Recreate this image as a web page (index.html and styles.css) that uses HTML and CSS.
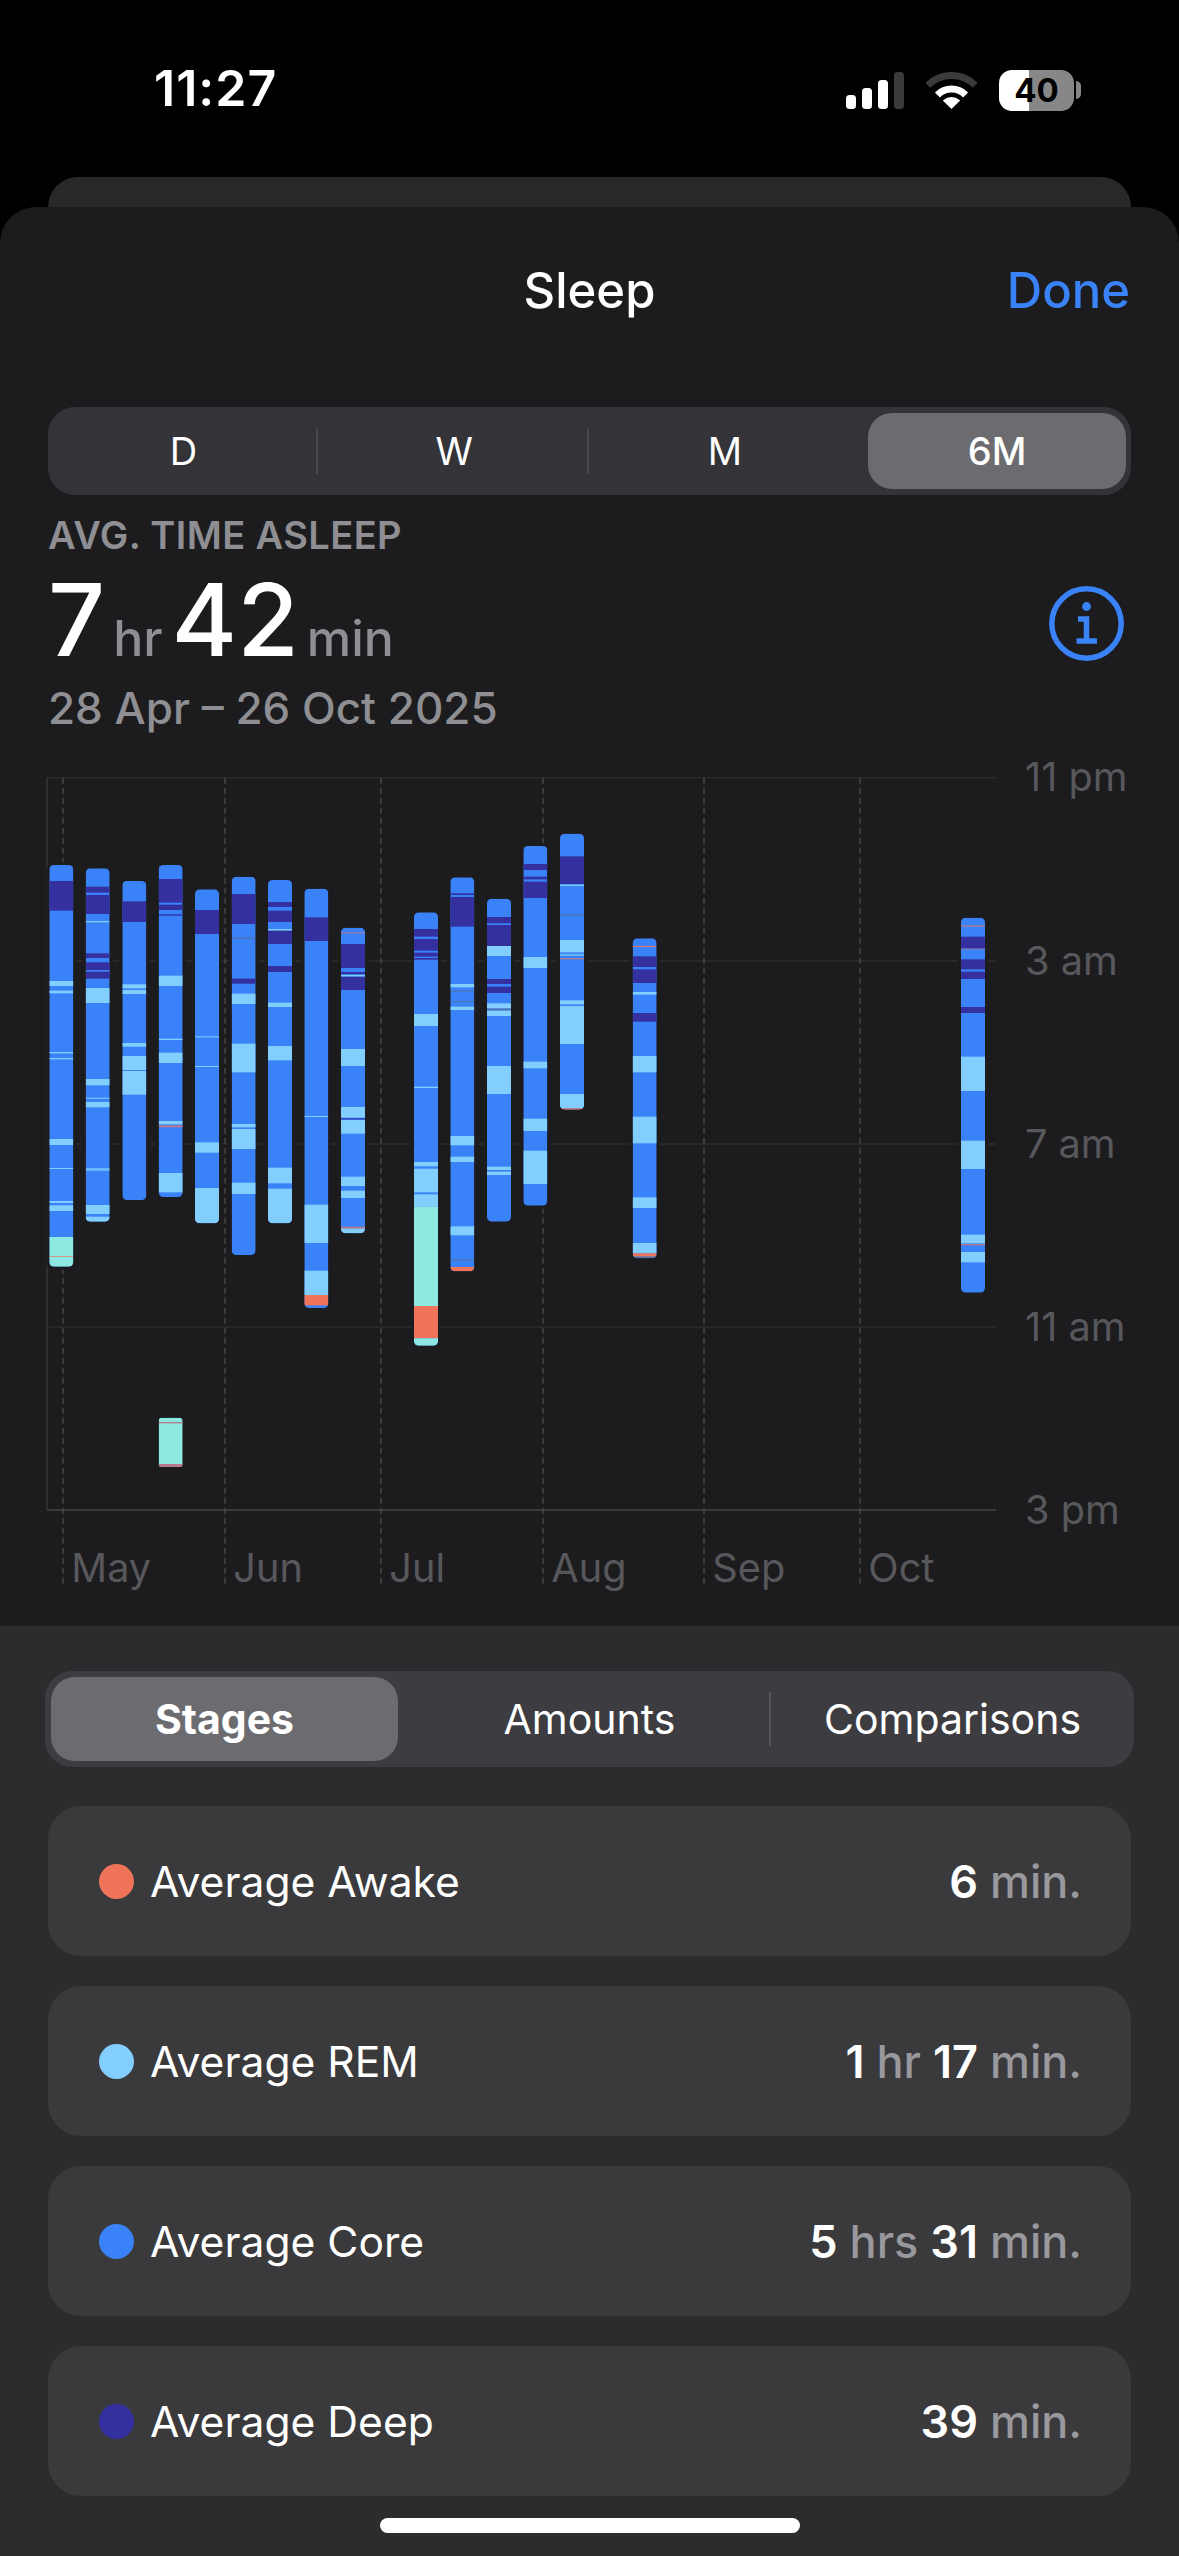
FILE: index.html
```html
<!DOCTYPE html>
<html lang="en">
<head>
<meta charset="utf-8">
<title>Sleep</title>
<link rel="stylesheet" href="styles.css">
</head>
<body>
<div class="phone">
  <header class="status">
    <span class="time">11:27</span>
    <div class="status-icons">
      <div class="signal"><i class="b1"></i><i class="b2"></i><i class="b3"></i><i class="b4"></i></div>
      <svg class="wifi" width="51" height="37" viewBox="0 0 51 37">
        <path class="wifi-dim" d="M1.8 13.3A33.5 33.5 0 0 1 49.2 13.3"/>
        <path class="wifi-on" d="M11.4 22.9A20 20 0 0 1 39.6 22.9"/>
        <path class="wifi-tip" d="M25.5 37L16.8 28.4Q25.5 21.8 34.2 28.4Z"/>
      </svg>
      <div class="battery"><span class="battery-level">40</span><i class="battery-nub"></i></div>
    </div>
  </header>
  <div class="peek"></div>
  <main class="sheet">
    <nav class="nav">
      <span></span>
      <span class="nav-title">Sleep</span>
      <span class="nav-done">Done</span>
    </nav>
    <div class="range">
      <span class="range-item rule-r">D</span>
      <span class="range-item rule-r">W</span>
      <span class="range-item">M</span>
      <span class="range-item on">6M</span>
    </div>
    <section class="summary">
      <div>
        <div class="summary-label">AVG. TIME ASLEEP</div>
        <div class="summary-value"><b>7</b><small>hr</small><b>42</b><small>min</small></div>
        <div class="summary-date">28 Apr – 26 Oct 2025</div>
      </div>
      <svg class="info" width="75" height="75" viewBox="0 0 75 75">
        <circle cx="37.5" cy="37.5" r="34.7"/>
        <circle class="info-dot" cx="37.5" cy="20.5" r="4.4"/>
        <path d="M29 33H37.5V55M27.5 55H48"/>
      </svg>
    </section>
    <svg class="chart" viewBox="0 -30 3447 2568">
      <g class="grid">
        <path class="grid-edge" d="M51 -7V2190"/>
        <path d="M51 -7H2898M51 543H2898M51 1092H2898M51 1641H2898"/>
        <path class="grid-base" d="M51 2190H2898"/>
      </g>
      <path class="dash" d="M99 -7V2424M585 -7V2424M1053 -7V2424M1539 -7V2424M2022 -7V2424M2490 -7V2424"/>

      <g transform="translate(58 0)"><clipPath id="b0"><rect width="72" y="255" height="1205" rx="14"/></clipPath><rect class="halo" width="72" y="255" height="1205" rx="14"/><g clip-path="url(#b0)">
        <rect class="s c" y="255" height="1205"/><rect class="s d" y="303" height="89"/><rect class="s r" y="603" height="15"/><rect class="s r" y="632" height="8"/><rect class="s r" y="816" height="4"/><rect class="s r" y="834" height="4"/><rect class="s r" y="1077" height="18"/><rect class="s r" y="1164" height="3"/><rect class="s r" y="1263" height="6"/><rect class="s r" y="1276" height="17"/><rect class="s t" y="1371" height="89"/><rect class="s a" y="1429" height="2"/>
      </g></g>
      <g transform="translate(167 0)"><clipPath id="b1"><rect width="72" y="265" height="1060" rx="14"/></clipPath><rect class="halo" width="72" y="265" height="1060" rx="14"/><g clip-path="url(#b1)">
        <rect class="s c" y="265" height="1060"/><rect class="s d" y="320" height="18"/><rect class="s d" y="345" height="57"/><rect class="s r" y="423" height="4"/><rect class="s d" y="520" height="14"/><rect class="s d" y="547" height="23"/><rect class="s d" y="575" height="21"/><rect class="s r" y="624" height="45"/><rect class="s r" y="897" height="19"/><rect class="s r" y="953" height="3"/><rect class="s r" y="966" height="16"/><rect class="s r" y="1165" height="4"/><rect class="s r" y="1171" height="2"/><rect class="s r" y="1275" height="27"/><rect class="s r" y="1310" height="15"/>
      </g></g>
      <g transform="translate(277 0)"><clipPath id="b2"><rect width="72" y="303" height="957" rx="14"/></clipPath><rect class="halo" width="72" y="303" height="957" rx="14"/><g clip-path="url(#b2)">
        <rect class="s c" y="303" height="957"/><rect class="s d" y="364" height="62"/><rect class="s r" y="613" height="12"/><rect class="s r" y="630" height="12"/><rect class="s r" y="789" height="11"/><rect class="s r" y="828" height="42"/><rect class="s r" y="873" height="71"/>
      </g></g>
      <g transform="translate(386 0)"><clipPath id="b3"><rect width="72" y="255" height="996" rx="14"/></clipPath><rect class="halo" width="72" y="255" height="996" rx="14"/><g clip-path="url(#b3)">
        <rect class="s c" y="255" height="996"/><rect class="s d" y="297" height="71"/><rect class="s d" y="374" height="16"/><rect class="s d" y="403" height="4"/><rect class="s r" y="587" height="31"/><rect class="s r" y="776" height="4"/><rect class="s r" y="818" height="31"/><rect class="s r" y="1023" height="10"/><rect class="s p" y="1036" height="6"/><rect class="s r" y="1179" height="58"/>
      </g></g>
      <g transform="translate(495 0)"><clipPath id="b4"><rect width="72" y="328" height="1002" rx="14"/></clipPath><rect class="halo" width="72" y="328" height="1002" rx="14"/><g clip-path="url(#b4)">
        <rect class="s c" y="328" height="1002"/><rect class="s d" y="390" height="72"/><rect class="s r" y="769" height="3"/><rect class="s r" y="858" height="3"/><rect class="s r" y="1087" height="31"/><rect class="s r" y="1224" height="106"/>
      </g></g>
      <g transform="translate(605 0)"><clipPath id="b5"><rect width="72" y="290" height="1135" rx="14"/></clipPath><rect class="halo" width="72" y="290" height="1135" rx="14"/><g clip-path="url(#b5)">
        <rect class="s c" y="290" height="1135"/><rect class="s d" y="342" height="90"/><rect class="s m" y="472" height="4"/><rect class="s d" y="596" height="15"/><rect class="s r" y="641" height="31"/><rect class="s r" y="791" height="86"/><rect class="s r" y="1032" height="10"/><rect class="s r" y="1047" height="60"/><rect class="s r" y="1208" height="34"/>
      </g></g>
      <g transform="translate(714 0)"><clipPath id="b6"><rect width="72" y="300" height="1030" rx="14"/></clipPath><rect class="halo" width="72" y="300" height="1030" rx="14"/><g clip-path="url(#b6)">
        <rect class="s c" y="300" height="1030"/><rect class="s d" y="366" height="15"/><rect class="s d" y="392" height="34"/><rect class="s r" y="447" height="5"/><rect class="s d" y="452" height="40"/><rect class="s d" y="558" height="18"/><rect class="s r" y="668" height="13"/><rect class="s r" y="798" height="43"/><rect class="s r" y="1163" height="47"/><rect class="s r" y="1226" height="104"/>
      </g></g>
      <g transform="translate(823 0)"><clipPath id="b7"><rect width="72" y="326" height="1258" rx="14"/></clipPath><rect class="halo" width="72" y="326" height="1258" rx="14"/><g clip-path="url(#b7)">
        <rect class="s c" y="326" height="1258"/><rect class="s d" y="412" height="71"/><rect class="s r" y="1008" height="3"/><rect class="s r" y="1274" height="115"/><rect class="s r" y="1472" height="73"/><rect class="s a" y="1545" height="31"/>
      </g></g>
      <g transform="translate(933 0)"><clipPath id="b8"><rect width="72" y="443" height="917" rx="14"/></clipPath><rect class="halo" width="72" y="443" height="917" rx="14"/><g clip-path="url(#b8)">
        <rect class="s c" y="443" height="917"/><rect class="s p" y="457" height="3"/><rect class="s d" y="492" height="72"/><rect class="s d" y="576" height="6"/><rect class="s r" y="585" height="5"/><rect class="s d" y="590" height="40"/><rect class="s r" y="807" height="51"/><rect class="s r" y="981" height="32"/><rect class="s d" y="1015" height="3"/><rect class="s r" y="1020" height="41"/><rect class="s r" y="1190" height="28"/><rect class="s r" y="1232" height="22"/><rect class="s p" y="1340" height="6"/><rect class="s r" y="1346" height="14"/>
      </g></g>
      <g transform="translate(1152 0)"><clipPath id="b10"><rect width="72" y="397" height="1300" rx="14"/></clipPath><rect class="halo" width="72" y="397" height="1300" rx="14"/><g clip-path="url(#b10)">
        <rect class="s c" y="397" height="1300"/><rect class="s d" y="447" height="23"/><rect class="s d" y="477" height="35"/><rect class="s d" y="518" height="12"/><rect class="s d" y="534" height="5"/><rect class="s r" y="702" height="36"/><rect class="s r" y="920" height="4"/><rect class="s r" y="1146" height="13"/><rect class="s r" y="1166" height="71"/><rect class="s r" y="1243" height="37"/><rect class="s t" y="1280" height="298"/><rect class="s a" y="1578" height="97"/><rect class="s t" y="1675" height="22"/>
      </g></g>
      <g transform="translate(1261 0)"><clipPath id="b11"><rect width="72" y="292" height="1182" rx="14"/></clipPath><rect class="halo" width="72" y="292" height="1182" rx="14"/><g clip-path="url(#b11)">
        <rect class="s c" y="292" height="1182"/><rect class="s d" y="340" height="5"/><rect class="s d" y="351" height="89"/><rect class="s r" y="612" height="10"/><rect class="s m" y="632" height="3"/><rect class="s m" y="663" height="3"/><rect class="s r" y="680" height="10"/><rect class="s r" y="1068" height="28"/><rect class="s r" y="1130" height="16"/><rect class="s r" y="1339" height="27"/><rect class="s m" y="1438" height="4"/><rect class="s a" y="1461" height="13"/>
      </g></g>
      <g transform="translate(1371 0)"><clipPath id="b12"><rect width="72" y="356" height="969" rx="14"/></clipPath><rect class="halo" width="72" y="356" height="969" rx="14"/><g clip-path="url(#b12)">
        <rect class="s c" y="356" height="969"/><rect class="s d" y="411" height="19"/><rect class="s d" y="435" height="63"/><rect class="s r" y="498" height="30"/><rect class="s d" y="597" height="15"/><rect class="s d" y="620" height="19"/><rect class="s r" y="670" height="15"/><rect class="s m" y="686" height="6"/><rect class="s r" y="692" height="16"/><rect class="s r" y="858" height="84"/><rect class="s r" y="1160" height="10"/><rect class="s r" y="1175" height="10"/>
      </g></g>
      <g transform="translate(1480 0)"><clipPath id="b13"><rect width="72" y="198" height="1079" rx="14"/></clipPath><rect class="halo" width="72" y="198" height="1079" rx="14"/><g clip-path="url(#b13)">
        <rect class="s c" y="198" height="1079"/><rect class="s d" y="252" height="18"/><rect class="s d" y="290" height="8"/><rect class="s d" y="305" height="49"/><rect class="s r" y="531" height="33"/><rect class="s r" y="845" height="20"/><rect class="s r" y="1016" height="37"/><rect class="s r" y="1112" height="100"/>
      </g></g>
      <g transform="translate(1590 0)"><clipPath id="b14"><rect width="72" y="161" height="828" rx="14"/></clipPath><rect class="halo" width="72" y="161" height="828" rx="14"/><g clip-path="url(#b14)">
        <rect class="s c" y="161" height="828"/><rect class="s d" y="229" height="83"/><rect class="s r" y="314" height="4"/><rect class="s m" y="403" height="4"/><rect class="s r" y="480" height="37"/><rect class="s r" y="523" height="4"/><rect class="s p" y="534" height="4"/><rect class="s r" y="661" height="12"/><rect class="s r" y="678" height="114"/><rect class="s r" y="942" height="43"/><rect class="s a" y="985" height="4"/>
      </g></g>
      <g transform="translate(1808 0)"><clipPath id="b16"><rect width="72" y="475" height="960" rx="14"/></clipPath><rect class="halo" width="72" y="475" height="960" rx="14"/><g clip-path="url(#b16)">
        <rect class="s c" y="475" height="960"/><rect class="s a" y="498" height="3"/><rect class="s d" y="529" height="32"/><rect class="s d" y="568" height="41"/><rect class="s r" y="636" height="8"/><rect class="s d" y="699" height="26"/><rect class="s r" y="828" height="49"/><rect class="s r" y="1010" height="80"/><rect class="s r" y="1252" height="32"/><rect class="s r" y="1389" height="31"/><rect class="s a" y="1420" height="10"/><rect class="s m" y="1430" height="5"/>
      </g></g>
      <g transform="translate(2793 0)"><clipPath id="b25"><rect width="72" y="413" height="1125" rx="14"/></clipPath><rect class="halo" width="72" y="413" height="1125" rx="14"/><g clip-path="url(#b25)">
        <rect class="s c" y="413" height="1125"/><rect class="s p" y="436" height="4"/><rect class="s d" y="470" height="36"/><rect class="s p" y="506" height="2"/><rect class="s d" y="538" height="30"/><rect class="s d" y="575" height="22"/><rect class="s d" y="681" height="18"/><rect class="s r" y="830" height="103"/><rect class="s r" y="1082" height="85"/><rect class="s r" y="1364" height="26"/><rect class="s p" y="1392" height="4"/><rect class="s r" y="1416" height="31"/>
      </g></g>
      <g transform="translate(386 0)"><clipPath id="b3b"><rect width="72" y="1913" height="148" rx="10"/></clipPath><rect class="halo" width="72" y="1913" height="148" rx="10"/><g clip-path="url(#b3b)">
        <rect class="s t" y="1913" height="148"/><rect class="s p" y="1926" height="4"/><rect class="s p" y="2052" height="9"/>
      </g></g>

      <g class="axis">
        <text x="2985" y="34">11 pm</text>
        <text x="2985" y="586">3 am</text>
        <text x="2985" y="1135">7 am</text>
        <text x="2985" y="1684">11 am</text>
        <text x="2985" y="2233">3 pm</text>
        <text x="124" y="2406">May</text>
        <text x="610" y="2406">Jun</text>
        <text x="1078" y="2406">Jul</text>
        <text x="1564" y="2406">Aug</text>
        <text x="2047" y="2406">Sep</text>
        <text x="2515" y="2406">Oct</text>
      </g>
    </svg>
    <section class="panel">
      <div class="tabs">
        <span class="tab on">Stages</span>
        <span class="tab">Amounts</span>
        <span class="tab rule-l">Comparisons</span>
      </div>
      <ul class="rows">
        <li class="row"><i class="dot dot-awake"></i><span class="row-name">Average Awake</span><span class="row-val"><b>6</b> min.</span></li>
        <li class="row"><i class="dot dot-rem"></i><span class="row-name">Average REM</span><span class="row-val"><b>1</b> hr <b>17</b> min.</span></li>
        <li class="row"><i class="dot dot-core"></i><span class="row-name">Average Core</span><span class="row-val"><b>5</b> hrs <b>31</b> min.</span></li>
        <li class="row"><i class="dot dot-deep"></i><span class="row-name">Average Deep</span><span class="row-val"><b>39</b> min.</span></li>
      </ul>
      <div class="home"></div>
    </section>
  </main>
</div>
</body>
</html>
```

FILE: styles.css
```css
* { box-sizing: border-box; }
html, body { margin: 0; padding: 0; background: #000; }
body { font-family: Inter, "Noto Sans", sans-serif; color: #fff; }
i { display: block; }

.phone { width: 1179px; height: 2556px; background: #000; display: flex; flex-direction: column; overflow: hidden; }

/* status bar */
.status { height: 177px; flex: none; display: flex; justify-content: space-between; align-items: flex-start; padding: 58px 105px 0 154px; }
.time { font-size: 50px; line-height: 60px; font-weight: 600; letter-spacing: 1px; }
.status-icons { display: flex; align-items: flex-end; height: 50px; gap: 22px; margin-top: 9px; padding-bottom: 8px; }
.signal { display: flex; align-items: flex-end; gap: 6px; height: 37px; }
.signal i { width: 10px; border-radius: 3.5px; background: #fff; }
.signal .b1 { height: 14px; }
.signal .b2 { height: 21px; }
.signal .b3 { height: 29px; }
.signal .b4 { height: 37px; background: #3a3a3a; }
.wifi-dim, .wifi-on { fill: none; stroke-width: 7px; }
.wifi-dim { stroke: #3a3a3a; }
.wifi-on { stroke: #fff; }
.wifi-tip { fill: #fff; }
.battery { position: relative; width: 75px; height: 41px; border-radius: 13px; margin-bottom: -2px; background: linear-gradient(90deg, #fff 0 30px, #878787 30px); display: flex; align-items: center; justify-content: center; }
.battery-level { color: #000; font-size: 33px; font-weight: 700; line-height: 41px; }
.battery-nub { position: absolute; left: 77px; top: 11px; width: 5px; height: 18px; border-radius: 0 9px 9px 0; background: #878787; }

/* sheet */
.peek { height: 30px; flex: none; margin: 0 48px; background: #28282a; border-radius: 36px 36px 0 0; }
.sheet { flex: 1; display: flex; flex-direction: column; background: #1c1c1e; border-radius: 36px 36px 0 0; overflow: hidden; }

.nav { height: 200px; flex: none; display: grid; grid-template-columns: 1fr auto 1fr; align-items: start; padding: 54px 49px 0; }
.nav-title { font-size: 49px; line-height: 60px; font-weight: 500; }
.nav-done { font-size: 49px; line-height: 60px; font-weight: 500; color: #3a82f7; text-align: right; }

/* range control */
.range { height: 88px; flex: none; margin: 0 48px; display: grid; grid-template-columns: repeat(4, 1fr); background: #333338; border-radius: 27px; }
.range-item { position: relative; display: flex; align-items: center; justify-content: center; font-size: 38px; font-weight: 400; }
.range-item.on { margin: 6px 5px 6px 8px; background: #6c6c70; border-radius: 24px; font-weight: 500; }
.rule-r::after { content: ""; position: absolute; right: 1px; top: 21px; bottom: 21px; width: 2px; background: #48484c; }

/* summary */
.summary { height: 275px; flex: none; padding: 16px 55px 0 48px; display: flex; justify-content: space-between; align-items: flex-start; }
.summary-label { font-size: 38px; line-height: 48px; font-weight: 600; letter-spacing: 0.4px; color: #8e8e93; }
.summary-value { display: flex; align-items: baseline; height: 90px; margin-top: 16px; line-height: 90px; }
.summary-value b { font-size: 100px; font-weight: 500; }
.summary-value small { font-size: 50px; font-weight: 500; color: #8e8e93; margin: 0 9px 0 8px; }
.summary-date { font-size: 44px; line-height: 56px; font-weight: 500; color: #8e8e93; margin-top: 15px; }
.info { flex: none; margin-top: 75px; fill: none; stroke: #3a82f7; stroke-width: 5.5px; }
.info-dot { fill: #3a82f7; stroke: none; }

/* chart */
.chart { flex: none; width: 1149px; height: 856px; margin-left: 30px; display: block; overflow: visible; }
.grid path { fill: none; stroke: #2c2c2e; stroke-width: 4px; }
.grid .grid-edge { stroke: #38383a; }
.grid .grid-base { stroke: #3a3a3c; stroke-width: 6px; }
.dash { fill: none; stroke: #4a4a4c; stroke-width: 4px; stroke-dasharray: 18 12; }
.halo { fill: #1c1c1e; stroke: #1c1c1e; stroke-width: 18px; }
.s { width: 72px; }
.c { fill: #3a82f7; }
.r { fill: #82cfff; }
.d { fill: #3430a0; }
.a { fill: #f0745a; }
.t { fill: #8ce8e0; }
.m { fill: #4f74ad; }
.p { fill: #b8798e; }
.axis text { font-size: 119px; fill: #58585c; font-weight: 400; }

/* bottom panel */
.panel { flex: 1; background: #2c2c2e; padding: 45px 45px 0; }
.tabs { height: 96px; display: grid; grid-template-columns: repeat(3, 1fr); background: #3d3d41; border-radius: 27px; }
.tab { position: relative; display: flex; align-items: center; justify-content: center; font-size: 41px; font-weight: 400; }
.tab.on { margin: 6px 10px 6px 6px; background: #6c6c70; border-radius: 24px; font-weight: 700; }
.rule-l::before { content: ""; position: absolute; left: -2px; top: 21px; bottom: 21px; width: 2px; background: #55555a; }
.rows { list-style: none; margin: 39px 3px 0; padding: 0; display: flex; flex-direction: column; gap: 30px; }
.row { height: 150px; display: flex; align-items: center; padding: 0 49px 0 51px; background: #3a3a3c; border-radius: 33px; font-size: 42.6px; }
.dot { width: 35px; height: 35px; border-radius: 50%; margin-right: 16px; }
.dot-awake { background: #f0745a; }
.dot-rem { background: #82cfff; }
.dot-core { background: #3a82f7; }
.dot-deep { background: #3430a0; }
.row-val { margin-left: auto; color: #98989d; font-size: 45px; font-weight: 500; }
.row-val b { color: #fff; font-weight: 600; }
.home { width: 420px; height: 15px; margin: 22px auto 0; background: #fff; border-radius: 8px; }
```
